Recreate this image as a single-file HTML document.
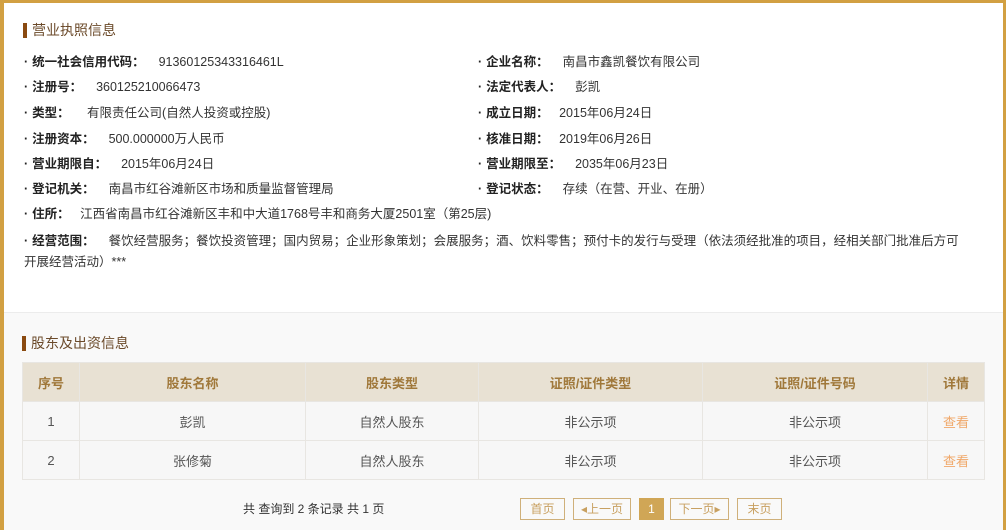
<!DOCTYPE html><html><head><meta charset="utf-8"><style>
body{margin:0;width:1006px;height:529px;overflow:hidden;background:#d2a042;font-family:"Liberation Sans","Noto Sans CJK SC",sans-serif;font-size:12.5px;color:#333;position:relative}
.top{position:absolute;left:4px;top:3px;width:999px;height:309px;background:#fff}
.bot{position:absolute;left:4px;top:312px;width:999px;height:217px;background:#f9f9f9;border-top:1px solid #ececec}
.h{position:absolute;font-size:14px;color:#6b4a2a;border-left:4px solid #8a4a10;padding-left:5px;line-height:15px}
.r{position:absolute;white-space:nowrap;line-height:16px}
.r b{font-weight:bold;color:#222}
.r b:before{content:"·";margin-right:4px}
table{position:absolute;left:22px;top:362px;width:963px;border-collapse:collapse;text-align:center}
td,th{border:1px solid #e8e6e2;height:38px;padding:0;color:#555;font-size:13px}
th{background:#e8e1d3;color:#a0783a;font-weight:bold}
td{background:#f7f7f7}
.l{color:#f0a86a}
.pg{position:absolute;top:498px;height:20px;border:1px solid #cfb07a;color:#c8a060;font-size:12px;line-height:20px;text-align:center}
</style></head><body>
<div class="top"></div><div class="bot"></div>
<div class="h" style="left:23px;top:23px">营业执照信息</div>
<div class="r" style="left:24px;top:54px"><b>统一社会信用代码：</b>&nbsp;&nbsp;&nbsp;&nbsp;91360125343316461L</div>
<div class="r" style="left:24px;top:79px"><b>注册号：</b>&nbsp;&nbsp;&nbsp;&nbsp;360125210066473</div>
<div class="r" style="left:24px;top:105px"><b>类型：</b>&nbsp;&nbsp;&nbsp;&nbsp;&nbsp;有限责任公司(自然人投资或控股)</div>
<div class="r" style="left:24px;top:131px"><b>注册资本：</b>&nbsp;&nbsp;&nbsp;&nbsp;500.000000万人民币</div>
<div class="r" style="left:24px;top:156px"><b>营业期限自：</b>&nbsp;&nbsp;&nbsp;&nbsp;2015年06月24日</div>
<div class="r" style="left:24px;top:181px"><b>登记机关：</b>&nbsp;&nbsp;&nbsp;&nbsp;南昌市红谷滩新区市场和质量监督管理局</div>
<div class="r" style="left:24px;top:206px"><b>住所：</b>&nbsp;&nbsp;&nbsp;江西省南昌市红谷滩新区丰和中大道1768号丰和商务大厦2501室（第25层)</div>
<div class="r" style="left:24px;top:233px"><b>经营范围：</b>&nbsp;&nbsp;&nbsp;&nbsp;餐饮经营服务；餐饮投资管理；国内贸易；企业形象策划；会展服务；酒、饮料零售；预付卡的发行与受理（依法须经批准的项目，经相关部门批准后方可</div>
<div class="r" style="left:24px;top:254px">开展经营活动）***</div>
<div class="r" style="left:478px;top:54px"><b>企业名称：</b>&nbsp;&nbsp;&nbsp;&nbsp;南昌市鑫凯餐饮有限公司</div>
<div class="r" style="left:478px;top:79px"><b>法定代表人：</b>&nbsp;&nbsp;&nbsp;&nbsp;彭凯</div>
<div class="r" style="left:478px;top:105px"><b>成立日期：</b>&nbsp;&nbsp;&nbsp;2015年06月24日</div>
<div class="r" style="left:478px;top:131px"><b>核准日期：</b>&nbsp;&nbsp;&nbsp;2019年06月26日</div>
<div class="r" style="left:478px;top:156px"><b>营业期限至：</b>&nbsp;&nbsp;&nbsp;&nbsp;2035年06月23日</div>
<div class="r" style="left:478px;top:181px"><b>登记状态：</b>&nbsp;&nbsp;&nbsp;&nbsp;存续（在营、开业、在册）</div>
<div class="h" style="left:22px;top:336px">股东及出资信息</div>
<table><tr><th style="width:56px">序号</th><th style="width:225px">股东名称</th><th style="width:172px">股东类型</th><th style="width:223px">证照/证件类型</th><th style="width:224px">证照/证件号码</th><th>详情</th></tr>
<tr><td>1</td><td>彭凯</td><td>自然人股东</td><td>非公示项</td><td>非公示项</td><td class="l">查看</td></tr>
<tr><td>2</td><td>张修菊</td><td>自然人股东</td><td>非公示项</td><td>非公示项</td><td class="l">查看</td></tr></table>
<div class="r" style="left:243px;top:501px;font-size:12px">共 查询到 2 条记录 共 1 页</div>
<div class="pg" style="left:520px;width:43px">首页</div>
<div class="pg" style="left:573px;width:56px">◂上一页</div>
<div class="pg" style="left:639px;width:23px;background:#d0a656;color:#fff;border-color:#d0a656">1</div>
<div class="pg" style="left:670px;width:57px">下一页▸</div>
<div class="pg" style="left:737px;width:43px">末页</div>
</body></html>
